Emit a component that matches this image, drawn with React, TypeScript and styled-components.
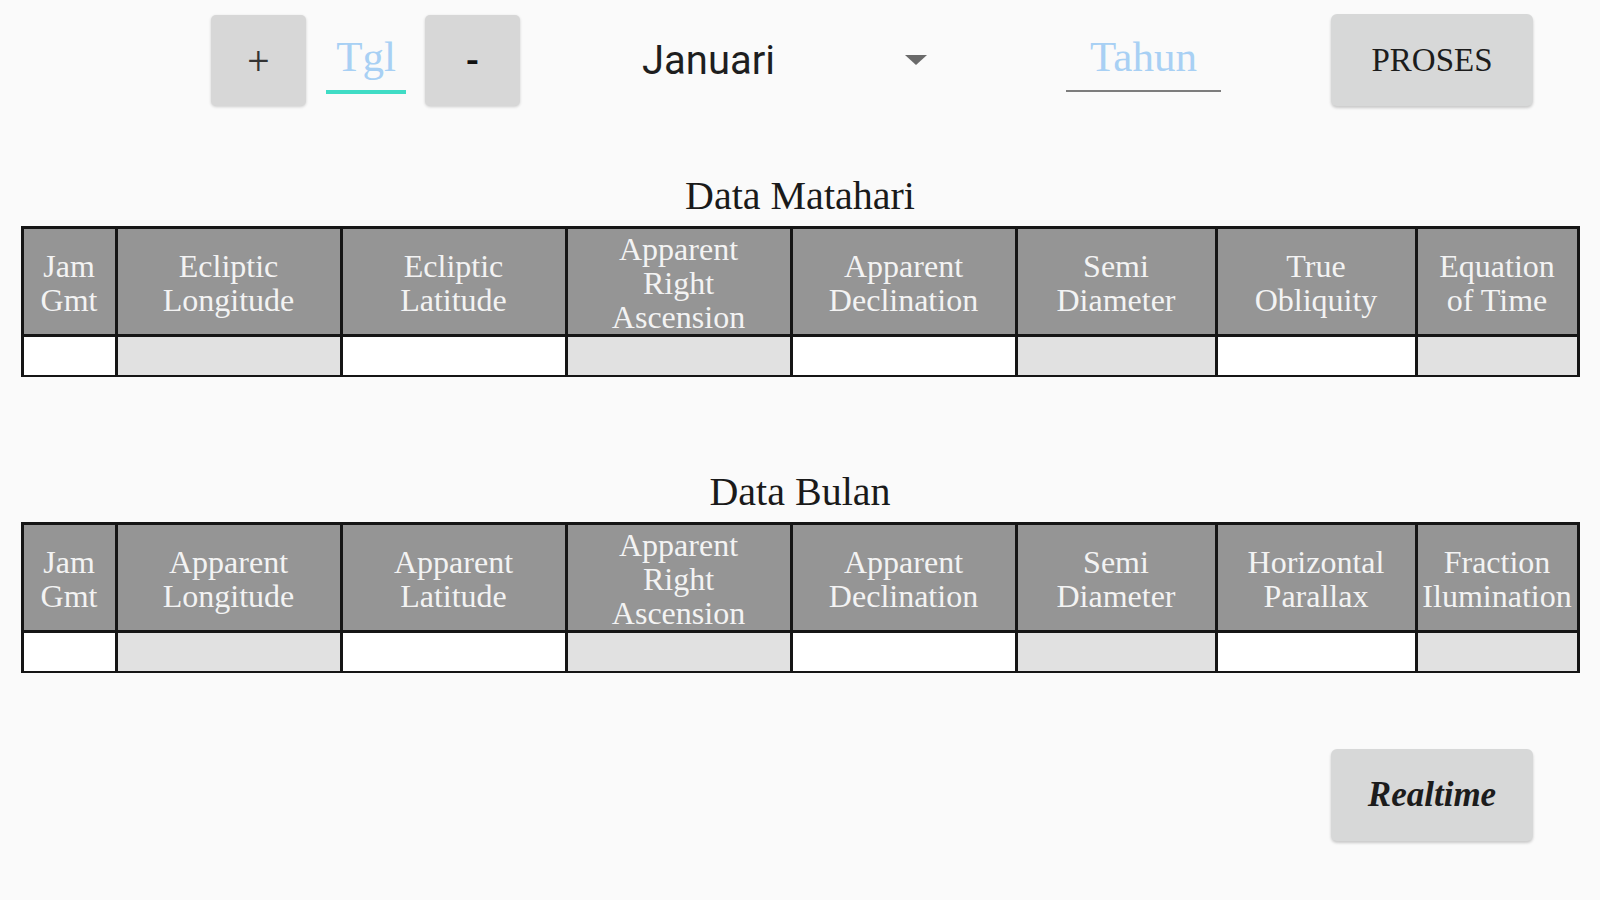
import React from "react";
import styled, { createGlobalStyle } from "styled-components";

const GlobalStyle = createGlobalStyle`
  html, body {
    margin: 0;
    padding: 0;
    background: #fafafa;
  }
  body {
    font-family: "Liberation Serif", "Times New Roman", serif;
  }
`;

const Page = styled.div`
  width: 1600px;
  min-height: 900px;
  box-sizing: border-box;
  padding-top: 14px;
  display: flex;
  flex-direction: column;
  background: #fafafa;
`;

const TopBar = styled.div`
  display: flex;
  align-items: flex-start;
  height: 92px;
  padding-left: 211px;
`;

const SquareButton = styled.button<{ $offset?: number; $dark?: boolean }>`
  width: 95px;
  height: 91px;
  margin-top: 1px;
  margin-left: ${(p) => p.$offset ?? 0}px;
  padding: 0;
  border: none;
  border-radius: 5px;
  background: #d7d7d7;
  box-shadow: 0 1px 3px rgba(0, 0, 0, 0.18);
  font-family: Roboto, "Liberation Sans", sans-serif;
  font-size: 38px;
  font-weight: ${(p) => (p.$dark ? 500 : 300)};
  color: ${(p) => (p.$dark ? "#111" : "#333")};
  display: flex;
  align-items: center;
  justify-content: center;
`;

const Field = styled.div<{ $width: number; $offset: number }>`
  width: ${(p) => p.$width}px;
  margin-left: ${(p) => p.$offset}px;
  padding-top: 19px;
  display: flex;
  flex-direction: column;
  align-items: center;
`;

const FieldText = styled.span`
  font-family: "Liberation Serif", "Times New Roman", serif;
  font-size: 43px;
  line-height: 48px;
  color: #a8d0f4;
  white-space: nowrap;
`;

const FieldLine = styled.div<{ $color: string; $thickness: number; $gap: number }>`
  align-self: stretch;
  margin-top: ${(p) => p.$gap}px;
  height: ${(p) => p.$thickness}px;
  background: ${(p) => p.$color};
`;

const Spinner = styled.div`
  width: 286px;
  height: 92px;
  margin-left: 122px;
  display: flex;
  align-items: center;
  justify-content: space-between;
  font-family: Roboto, "Liberation Sans", sans-serif;
  font-size: 40px;
  color: #1e1e1e;
`;

const ActionButton = styled.button<{ $offset?: number; $italic?: boolean }>`
  width: 202px;
  height: 92px;
  margin-left: ${(p) => p.$offset ?? 0}px;
  padding: 0;
  border: none;
  border-radius: 6px;
  background: #d7d8d8;
  box-shadow: 0 2px 3px rgba(0, 0, 0, 0.2);
  font-family: "Liberation Serif", "Times New Roman", serif;
  font-size: ${(p) => (p.$italic ? 35 : 33)}px;
  font-style: ${(p) => (p.$italic ? "italic" : "normal")};
  font-weight: ${(p) => (p.$italic ? 700 : 400)};
  color: #1c1c1c;
`;

const Section = styled.section<{ $top: number }>`
  margin-top: ${(p) => p.$top}px;
  display: flex;
  flex-direction: column;
  align-items: center;
`;

const SectionTitle = styled.h2`
  margin: 0 0 7px;
  font-family: "Liberation Serif", "Times New Roman", serif;
  font-size: 40px;
  line-height: 46px;
  font-weight: 400;
  color: #1a1a1a;
`;

const DataGrid = styled.div`
  display: grid;
  grid-template-columns: 91px 222px 222px 222px 222px 197px 197px 159px;
  grid-template-rows: 105px 38px;
  gap: 3px;
  padding: 3px 3px 2px;
  background: #151515;
`;

const HeadCell = styled.div`
  background: #959595;
  color: #f3f3f3;
  font-family: "Liberation Serif", "Times New Roman", serif;
  font-size: 32px;
  line-height: 34px;
  text-align: center;
  display: flex;
  align-items: center;
  justify-content: center;
  white-space: nowrap;
`;

const HeadText = styled.span`
  display: block;
  padding-top: 3px;
`;

const ValueCell = styled.div<{ $shaded: boolean }>`
  background: ${(p) => (p.$shaded ? "#e1e1e1" : "#ffffff")};
`;

const Footer = styled.div`
  margin-top: 76px;
  display: flex;
  justify-content: flex-end;
  padding-right: 67px;
`;

const DropArrow = () => (
  <svg width="24" height="12" viewBox="0 0 24 12">
    <path d="M1 1 L23 1 L12 11 Z" fill="#6a6a6a" />
  </svg>
);

const sunHeaders = [
  ["Jam", "Gmt"],
  ["Ecliptic", "Longitude"],
  ["Ecliptic", "Latitude"],
  ["Apparent", "Right", "Ascension"],
  ["Apparent", "Declination"],
  ["Semi", "Diameter"],
  ["True", "Obliquity"],
  ["Equation", "of Time"],
];

const moonHeaders = [
  ["Jam", "Gmt"],
  ["Apparent", "Longitude"],
  ["Apparent", "Latitude"],
  ["Apparent", "Right", "Ascension"],
  ["Apparent", "Declination"],
  ["Semi", "Diameter"],
  ["Horizontal", "Parallax"],
  ["Fraction", "Ilumination"],
];

const DataTable = ({ headers }: { headers: string[][] }) => (
  <DataGrid>
    {headers.map((lines, i) => (
      <HeadCell key={"h" + i}>
        <HeadText>
          {lines.map((l, j) => (
            <React.Fragment key={j}>
              {j > 0 && <br />}
              {l}
            </React.Fragment>
          ))}
        </HeadText>
      </HeadCell>
    ))}
    {headers.map((_, i) => (
      <ValueCell key={"v" + i} $shaded={i % 2 === 1} />
    ))}
  </DataGrid>
);

export default function App() {
  return (
    <>
      <GlobalStyle />
      <Page>
        <TopBar>
          <SquareButton>+</SquareButton>
          <Field $width={80} $offset={20}>
            <FieldText>Tgl</FieldText>
            <FieldLine $color="#3fdcc5" $thickness={4} $gap={9} />
          </Field>
          <SquareButton $offset={19} $dark>
            -
          </SquareButton>
          <Spinner>
            <span>Januari</span>
            <DropArrow />
          </Spinner>
          <Field $width={155} $offset={138}>
            <FieldText>Tahun</FieldText>
            <FieldLine $color="#7d7d7d" $thickness={2} $gap={9} />
          </Field>
          <ActionButton $offset={110}>PROSES</ActionButton>
        </TopBar>

        <Section $top={67}>
          <SectionTitle>Data Matahari</SectionTitle>
          <DataTable headers={sunHeaders} />
        </Section>

        <Section $top={92}>
          <SectionTitle>Data Bulan</SectionTitle>
          <DataTable headers={moonHeaders} />
        </Section>

        <Footer>
          <ActionButton $italic>Realtime</ActionButton>
        </Footer>
      </Page>
    </>
  );
}
